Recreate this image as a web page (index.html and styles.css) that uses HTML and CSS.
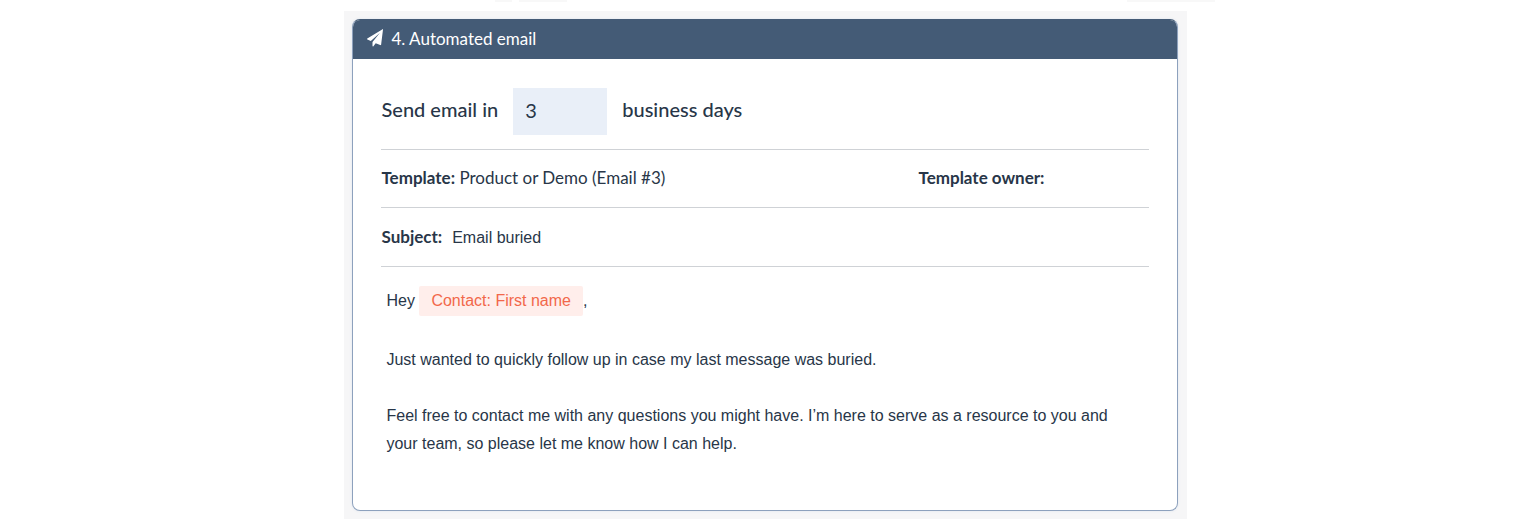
FILE: index.html
```html
<!DOCTYPE html>
<html lang="en">
<head>
    <meta charset="UTF-8">
    <meta name="viewport" content="width=device-width, initial-scale=1.0">
    <title>Automated email</title>
    <link rel="stylesheet" href="styles.css">
</head>
<body>
    <div class="previous-step">
        <span class="stub stub-small"></span>
        <span class="stub"></span>
        <span class="stub stub-right"></span>
    </div>

    <main class="step">
        <section class="card">
            <header class="card-header">
                <svg class="icon" viewBox="0 0 16 18" aria-hidden="true">
                    <path fill="currentColor" d="M15.600.2L.3 9.600c-.4.300-.4.800.1 1l3.400 1.300L13 3.800 5.500 12.900v4c0 .5.600.7.900.3l2.300-2.900 4.500 1.800c.4.200.800 0 .9-.4L16 .6c.1-.4-.1-.6-.4-.4z"/>
                </svg>
                <h1>4. Automated email</h1>
            </header>

            <div class="card-body">
                <div class="row delay">
                    <label for="delay">Send email in</label>
                    <input type="text" id="delay" value="3">
                    <span>business days</span>
                </div>
                <div class="row template">
                    <p><strong>Template:</strong> Product or Demo (Email #3)</p>
                    <p class="owner"><strong>Template owner:</strong></p>
                </div>
                <div class="row subject">
                    <strong>Subject:</strong>
                    <span class="subject-text">Email buried</span>
                </div>

                <div class="message">
                    <p class="greeting">Hey <span class="token">Contact: First name</span>,</p>
                    <p>Just wanted to quickly follow up in case my last message was buried.</p>
                    <p>Feel free to contact me with any questions you might have. I’m here to serve as a resource to you and your team, so please let me know how I can help.</p>
                </div>
            </div>
        </section>
    </main>
</body>
</html>
```
FILE: styles.css
```css
* {
    box-sizing: border-box;
}
body {
    margin: 0;
    padding-right: 2px;
    background-color: #fff;
    color: #283648;
    font-family: Lato, "Open Sans", sans-serif;
    font-size: 17px;
}
h1, p {
    margin: 0;
}
strong {
    font-weight: 700;
}
.previous-step {
    display: flex;
    gap: 7px;
    width: 55%;
    margin: 0 auto;
    padding-left: 151px;
}
.stub {
    width: 48px;
    height: 2px;
    background-color: #f8f8f8;
}
.stub-small {
    width: 17px;
}
.stub-right {
    width: 88px;
    margin-left: auto;
    margin-right: -28px;
}
.step {
    width: 55%;
    margin: 9px auto 12px;
    padding: 8px 9px 8px 8px;
    background-color: #f6f6f7;
}
.card {
    overflow: hidden;
    border: 1px solid #8da1bd;
    border-top-color: #445b76;
    border-radius: 8px;
    background-color: #fff;
    box-shadow: 0 0 3px #dfe5ee;
}
.card-header {
    display: flex;
    align-items: center;
    gap: 8px;
    height: 39px;
    padding: 0 14px 3px;
    background-color: #445b76;
    color: #fff;
}
.card-header h1 {
    font-size: 17px;
    font-weight: 400;
}
.icon {
    width: 16px;
    height: 18px;
}
.card-body {
    padding: 29px 28px;
}
.row {
    display: flex;
    align-items: center;
    border-bottom: 1px solid #cfd2d6;
}
.delay {
    gap: 15px;
    padding-bottom: 14px;
    font-size: 20px;
}
.delay label,
.delay span {
    padding-bottom: 5px;
    font-weight: 500;
}
.delay input {
    width: 94px;
    height: 47px;
    padding: 0 12px 4px;
    border: 0;
    background-color: #e9eff8;
    color: inherit;
    font: inherit;
}
.template {
    justify-content: space-between;
    height: 58px;
    padding-bottom: 2px;
}
.owner {
    width: 230px;
}
.subject {
    align-items: baseline;
    gap: 10px;
    height: 59px;
    padding-top: 18px;
}
.subject-text,
.message {
    font-family: "Liberation Sans", Arial, sans-serif;
    font-size: 16px;
}
.message {
    padding: 19px 18px 23px 5px;
    line-height: 28px;
}
.message p + p {
    margin-top: 28px;
}
.message .greeting {
    padding-bottom: 2px;
}
.token {
    display: inline-block;
    padding: 1px 12px;
    border-radius: 2px;
    background-color: #ffeeeb;
    color: #f2684a;
}
```
